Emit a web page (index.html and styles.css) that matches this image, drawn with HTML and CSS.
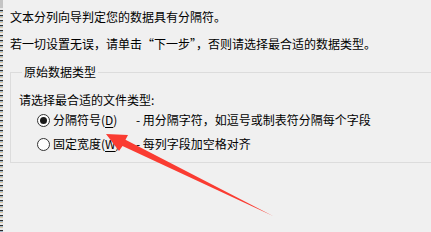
FILE: index.html
```html
<!DOCTYPE html>
<html lang="zh-CN">
<head>
<meta charset="UTF-8" />
<title>文本分列向导</title>
<link rel="stylesheet" href="styles.css">
</head>
<body>
<div class="window">
  <div class="edge" aria-hidden="true"></div>
  <div class="wizard">
    <p class="line line-first">文本分列向导判定您的数据具有分隔符。</p>
    <p class="line">若一切设置无误，请单击“下一步”，否则请选择最合适的数据类型。</p>

    <fieldset class="group">
      <legend>原始数据类型</legend>
      <div class="group-title">请选择最合适的文件类型:</div>
      <div class="option">
        <span class="radio checked"></span>
        <span class="option-name">分隔符号(<u>D</u>)</span>
        <span class="option-desc">- 用分隔字符，如逗号或制表符分隔每个字段</span>
      </div>
      <div class="option">
        <span class="radio"></span>
        <span class="option-name">固定宽度(<u>W</u>)</span>
        <span class="option-desc">- 每列字段加空格对齐</span>
      </div>
    </fieldset>
  </div>
</div>

<!-- annotation arrow drawn over the dialog -->
<svg class="arrow" width="431" height="232" viewBox="0 0 431 232" aria-hidden="true">
  <polygon points="106,134 128,135 125.5,139.7 273,216 122.5,145.9 119,151" fill="#fa3c32"></polygon>
</svg>
</body>
</html>
```

FILE: styles.css
```css
*, *::before, *::after {
  box-sizing: border-box;
}
html, body {
  margin: 0;
  height: 100%;
  overflow: hidden;
}
body {
  background: #f0f0f0;
  color: #000;
  font-family: "Noto Sans CJK SC", "Microsoft YaHei", sans-serif;
  font-size: 12px;
  line-height: 16px;
  position: relative;
}
.window {
  display: flex;
  height: 100%;
}
/* sheet edge peeking out on the left */
.edge {
  width: 3px;
  flex: none;
  background:
    linear-gradient(#c4c4c4, #c4c4c4) top / 3px 8px no-repeat,
    repeating-linear-gradient(180deg, #2b2b2b 0 1px, #9fb6c8 1px 2px, #d8c7a4 2px 3px, #e8e8e8 3px 5px);
}
.wizard {
  flex: 1;
  padding: 9px 0 0 7px;
  min-width: 0;
}
.line {
  margin: 0;
  white-space: nowrap;
}
.line-first {
  margin-bottom: 11px;
}
/* group box runs off the right side of the capture, so no right border */
.group {
  margin: 12px 0 0 0;
  padding: 0 0 6px 8px;
  border: 1px solid #dcdcdc;
  border-right: none;
  min-width: 0;
}
.group legend {
  margin-left: 3px;
  padding: 0 2px;
  line-height: 16px;
}
.group-title {
  margin-top: 12px;
  white-space: nowrap;
}
.option {
  display: flex;
  align-items: center;
  height: 24px;
  white-space: nowrap;
}
.option:first-of-type {
  margin-top: 1px;
}
.radio {
  width: 13px;
  height: 13px;
  margin-left: 18px;
  margin-right: 3px;
  border: 1px solid #333;
  border-radius: 50%;
  background: #fff;
  flex: none;
  display: flex;
  align-items: center;
  justify-content: center;
}
.radio.checked::after {
  content: "";
  width: 7px;
  height: 7px;
  border-radius: 50%;
  background: #1a1a1a;
}
.option-name {
  width: 83px;
  flex: none;
}
.option-name u {
  text-underline-offset: 2px;
}
.arrow {
  position: absolute;
  top: 0;
  left: 0;
  pointer-events: none;
}
```
